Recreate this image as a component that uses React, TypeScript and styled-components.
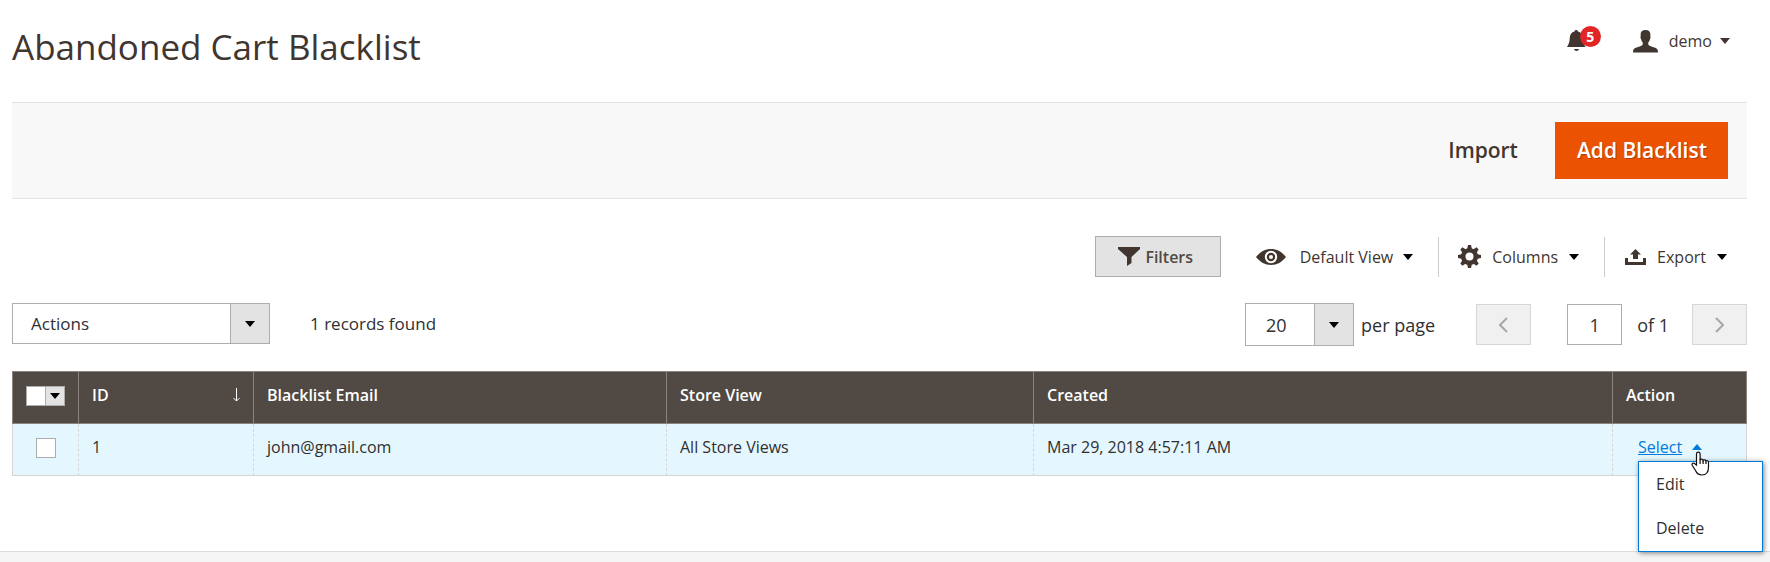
import React from "react";
import styled, { createGlobalStyle } from "styled-components";

const ink = "#41362f";
const text = "#303030";
const line = "#adadad";
const blue = "#007bdb";

const GlobalStyle = createGlobalStyle`
  *, *::before, *::after { box-sizing: border-box; }
  body {
    margin: 0;
    background: #fff;
    color: ${text};
    font-family: "Open Sans", "Noto Sans", sans-serif;
    font-size: 16px;
    line-height: 22px;
  }
  button, input, select { font: inherit; color: inherit; margin: 0; border-radius: 0; }
  #root { min-height: 100vh; display: flex; flex-direction: column; }
`;

const Page = styled.div`
  display: flex;
  flex-direction: column;
  padding: 0 23px 0 12px;
`;

const Header = styled.header`
  display: flex;
  justify-content: space-between;
  align-items: flex-start;
  height: 102px;
  padding: 23px 17px 0 0;
`;

const Title = styled.h1`
  margin: 0;
  color: ${ink};
  font-size: 35px;
  line-height: 48px;
  font-weight: 400;
`;

const UserArea = styled.div`
  display: flex;
  align-items: center;
  gap: 32px;
  height: 36px;
`;

const PlainButton = styled.button<{ $gap?: number }>`
  display: flex;
  align-items: center;
  gap: ${(p) => p.$gap ?? 0}px;
  padding: 0;
  border: 0;
  background: none;
  color: ${ink};
  white-space: nowrap;
  cursor: pointer;
`;

const BellButton = styled(PlainButton)`
  position: relative;
  width: 34px;
  height: 30px;
`;

const Badge = styled.span`
  position: absolute;
  top: 0;
  right: 0;
  width: 21px;
  height: 21px;
  border-radius: 50%;
  background: #e22626;
  color: #fff;
  font-size: 14px;
  line-height: 21px;
  font-weight: 700;
  text-align: center;
`;

const UserButton = styled(PlainButton)`
  gap: 8px;
  svg:first-child { margin-right: 3px; }
`;

const ActionBar = styled.section`
  display: flex;
  justify-content: flex-end;
  align-items: center;
  gap: 37px;
  padding: 19px;
  border-top: 1px solid #e3e3e3;
  border-bottom: 1px solid #e3e3e3;
  background: #f8f8f8;
`;

const ImportButton = styled(PlainButton)`
  font-size: 21px;
  line-height: 27px;
  font-weight: 600;
`;

const PrimaryButton = styled(ImportButton)`
  height: 57px;
  padding: 0 21px 0 22px;
  background: #eb5202;
  color: #fff;
  text-shadow: 1px 1px 0 rgba(0, 0, 0, 0.25);
`;

const Toolbar = styled.div`
  display: flex;
  justify-content: flex-end;
  align-items: center;
  margin-top: 37px;
`;

const FiltersButton = styled(PlainButton)`
  justify-content: center;
  width: 126px;
  height: 41px;
  padding-right: 4px;
  border: 1px solid ${line};
  background: #e3e3e3;
  color: #514943;
  font-weight: 600;
`;

const ToolItem = styled.div<{ $divided?: boolean; $left: number; $right: number }>`
  display: flex;
  align-items: center;
  height: 40px;
  padding: 0 ${(p) => p.$right}px 0 ${(p) => p.$left}px;
  border-left: ${(p) => (p.$divided ? "1px solid #ccc" : "0")};
`;

const Controls = styled.div`
  display: flex;
  justify-content: space-between;
  align-items: flex-start;
  margin-top: 26px;
  line-height: 24px;
`;

const Group = styled.div<{ $gap: number; $size?: number }>`
  display: flex;
  align-items: center;
  gap: ${(p) => p.$gap}px;
  font-size: ${(p) => (p.$size ? `${p.$size}px` : "inherit")};
  white-space: nowrap;
`;

const SelectBox = styled.span<{ $width: number; $height: number }>`
  display: grid;
  grid-template-columns: 1fr 39px;
  width: ${(p) => p.$width}px;
  height: ${(p) => p.$height}px;
  border: 1px solid ${line};
  background: #fff;
`;

const NativeSelect = styled.select<{ $inset?: number }>`
  grid-area: 1 / 1 / 2 / 3;
  width: 100%;
  padding: 0 0 0 ${(p) => p.$inset ?? 18}px;
  border: 0;
  background: none;
  appearance: none;
`;

const SelectArrow = styled.span`
  grid-area: 1 / 2 / 2 / 3;
  display: flex;
  align-items: center;
  justify-content: center;
  border-left: 1px solid ${line};
  background: #e3e3e3;
  pointer-events: none;
`;

const PageButton = styled.button`
  display: flex;
  align-items: center;
  justify-content: center;
  width: 55px;
  height: 41px;
  padding: 0;
  border: 1px solid #d6d6d6;
  background: #f0f0f0;
`;

const PageInput = styled.input`
  width: 55px;
  height: 41px;
  padding: 0;
  border: 1px solid ${line};
  background: #fff;
  text-align: center;
`;

const Grid = styled.table`
  width: 100%;
  margin-top: 25px;
  table-layout: fixed;
  border-collapse: separate;
  border-spacing: 0;
`;

const Th = styled.th`
  height: 53px;
  padding: 0 13px 5px;
  border: 1px solid #8a837f;
  border-right-width: 0;
  background: #514943;
  color: #fff;
  font-weight: 600;
  text-align: left;
  &:last-child { border-right-width: 1px; }
`;

const HeadLabel = styled.span`
  display: flex;
  justify-content: space-between;
  align-items: center;
`;

const Td = styled.td`
  height: 52px;
  padding: 0 13px 6px;
  border-left: 1px dashed #d6d6d6;
  border-bottom: 1px solid #d6d6d6;
  background: #e5f7fe;
  &:first-child { border-left-style: solid; }
  &:last-child { border-right: 1px solid #d6d6d6; }
`;

const CheckCell = styled(Td)`
  padding: 0 0 4px 23px;
`;

const CheckHead = styled(Th)`
  padding: 0 0 4px 13px;
`;

const Checkbox = styled.input`
  display: block;
  width: 20px;
  height: 20px;
  appearance: none;
  border: 1px solid ${line};
  background: #fff;
`;

const MultiCheck = styled.div`
  display: flex;
  width: 39px;
`;

const MultiToggle = styled(PlainButton)`
  justify-content: center;
  width: 19px;
  height: 20px;
  border: 1px solid ${line};
  border-left: 0;
  background: #e3e3e3;
`;

const ActionSelect = styled.div`
  position: relative;
  width: 64px;
  margin-left: 12px;
`;

const SelectLink = styled(PlainButton)`
  color: ${blue};
  span { text-decoration: underline; }
`;

const Menu = styled.ul`
  position: absolute;
  top: 25px;
  left: 0;
  z-index: 1;
  width: 125px;
  margin: 0;
  padding: 0 0 1px;
  list-style: none;
  border: 1px solid ${blue};
  background: #fff;
  box-shadow: 1px 1px 5px rgba(0, 0, 0, 0.5);
`;

const MenuLink = styled.a`
  display: block;
  padding: 11px 17px;
  color: ${text};
  text-decoration: none;
`;

const Pointer = styled.svg`
  position: absolute;
  top: 15px;
  left: 53px;
  z-index: 2;
  pointer-events: none;
`;

const Footer = styled.footer`
  flex: 1;
  min-height: 11px;
  margin-top: 75px;
  border-top: 1px solid #dcdcdc;
  background: #f5f5f5;
`;

const Caret = ({ color = "#000", up = false }: { color?: string; up?: boolean }) => (
  <svg width="10" height="6" viewBox="0 0 10 6" aria-hidden="true">
    <path d={up ? "M0 6 5 0l5 6z" : "M0 0h10L5 6z"} fill={color} />
  </svg>
);

const BellIcon = () => (
  <svg width="20" height="22" viewBox="0 0 20 22" fill={ink} aria-hidden="true">
    <path d="M7.500 1.500C7.500.5 8.200 0 9.200 0s1.700.5 1.700 1.500c3.200.8 4.600 3 4.800 6 .2 4.300.8 6.500 2.800 9.500H0c2-3 2.600-5.200 2.800-9.500.2-3 1.500-5.200 4.700-6z" />
    <path d="M7 19h5c-.3 1.300-1.200 2-2.500 2S7.300 20.300 7 19z" />
  </svg>
);

const UserIcon = () => (
  <svg width="25" height="23" viewBox="0 0 25 23" fill={ink} aria-hidden="true">
    <path d="M12.500 0c3.400 0 5 1.800 4.900 5l-.1 1.500c.5.300.4 1.600-.3 2.300-.3 1.800-.9 3-1.700 3.800v2c.4.800 1.200 1.200 2.400 1.600 4 1.300 6.800 2 7.100 4.300l.2 2H0l.2-2c.3-2.300 3.100-3 7.100-4.300 1.200-.4 2-.8 2.400-1.600v-2c-.8-.8-1.400-2-1.700-3.800-.7-.7-.8-2-.3-2.300L7.600 5c-.1-3.200 1.500-5 4.900-5z" />
  </svg>
);

const FunnelIcon = () => (
  <svg width="22" height="19" viewBox="0 0 22 19" fill={ink} aria-hidden="true">
    <path d="M0 0h22v2l-8.500 8v6L9 19v-9L0 2z" />
  </svg>
);

const EyeIcon = () => (
  <svg width="30" height="16" viewBox="0 0 30 16" aria-hidden="true">
    <path d="M0 8C4 3 9 0 15 0s11 3 15 8c-4 5-9 8-15 8S4 13 0 8z" fill={ink} />
    <circle cx="15" cy="8" r="5.200" fill="none" stroke="#fff" strokeWidth="2" />
    <circle cx="15" cy="8" r="2" fill="#fff" />
  </svg>
);

const GearIcon = () => (
  <svg width="23" height="23" viewBox="0 0 23 23" aria-hidden="true">
    <g fill={ink}>
      {[0, 45, 90, 135, 180, 225, 270, 315].map((a) => (
        <path key={a} d="M9 4.500 10 0h3l1 4.500z" transform={`rotate(${a} 11.500 11.500)`} />
      ))}
    </g>
    <circle cx="11.500" cy="11.500" r="6.300" fill="none" stroke={ink} strokeWidth="4.600" />
  </svg>
);

const ExportIcon = () => (
  <svg width="21" height="16" viewBox="0 0 21 16" fill={ink} aria-hidden="true">
    <path d="M0 9h3v4h15V9h3v7H0z" />
    <path d="M10.500 0 16 5.500h-3V10H8V5.500H5z" />
  </svg>
);

const Chevron = ({ right = false }: { right?: boolean }) => (
  <svg width="9" height="16" viewBox="0 0 9 16" fill="none" stroke="#aaa6a3" strokeWidth="2" aria-hidden="true">
    <path d={right ? "M1 1l7 7-7 7" : "M8 1 1 8l7 7"} />
  </svg>
);

const SortArrow = () => (
  <svg width="7" height="14" viewBox="0 0 7 14" fill="none" stroke="#fff" aria-hidden="true">
    <path d="M3.500 0v13M.5 10l3 3 3-3" />
  </svg>
);

const HandPointer = () => (
  <Pointer width="19" height="25" viewBox="0 0 19 25" aria-hidden="true">
    <path
      d="M5.500 14V3a1.800 1.800 0 0 1 3.600 0v6c.3-1.300 2.700-1.200 3 .5.500-1 2.700-.8 2.900.7.700-.9 2.500-.5 2.500 1V16c0 5-2.500 8-6.500 8-3.300 0-5.300-1.500-6.500-4.500L1.300 14.500c-1-2 1.300-3.200 2.500-1.800z"
      fill="#fff"
      stroke="#111"
      strokeWidth="1.200"
    />
    <path d="M9.100 8v5M12.100 9.500V13M15 10.500V13" stroke="#111" strokeWidth="1.200" />
  </Pointer>
);

const columns = [
  { label: "ID", width: 175, sorted: true },
  { label: "Blacklist Email", width: 413 },
  { label: "Store View", width: 367 },
  { label: "Created", width: 579 },
  { label: "Action", width: 135 },
];

const rows = [{ id: "1", email: "john@gmail.com", store: "All Store Views", created: "Mar 29, 2018 4:57:11 AM" }];

export default function App() {
  return (
    <>
      <GlobalStyle />
      <Page>
        <Header>
          <Title>Abandoned Cart Blacklist</Title>
          <UserArea>
            <BellButton aria-label="Notifications">
              <BellIcon />
              <Badge>5</Badge>
            </BellButton>
            <UserButton>
              <UserIcon />
              demo
              <Caret color={ink} />
            </UserButton>
          </UserArea>
        </Header>

        <ActionBar>
          <ImportButton>Import</ImportButton>
          <PrimaryButton>Add Blacklist</PrimaryButton>
        </ActionBar>

        <Toolbar>
          <FiltersButton $gap={5}>
            <FunnelIcon />
            Filters
          </FiltersButton>
          <ToolItem $left={35} $right={25}>
            <PlainButton $gap={10}>
              <PlainButton as="span" $gap={14}>
                <EyeIcon />
                Default View
              </PlainButton>
              <Caret />
            </PlainButton>
          </ToolItem>
          <ToolItem $divided $left={19} $right={25}>
            <PlainButton $gap={11}>
              <GearIcon />
              Columns
              <Caret />
            </PlainButton>
          </ToolItem>
          <ToolItem $divided $left={20} $right={20}>
            <PlainButton $gap={11}>
              <ExportIcon />
              Export
              <Caret />
            </PlainButton>
          </ToolItem>
        </Toolbar>

        <Controls>
          <Group $gap={40} $size={17}>
            <SelectBox $width={258} $height={41}>
              <NativeSelect aria-label="Actions">
                <option>Actions</option>
              </NativeSelect>
              <SelectArrow>
                <Caret />
              </SelectArrow>
            </SelectBox>
            <span>1 records found</span>
          </Group>
          <Group $gap={23} $size={18}>
            <Group $gap={41}>
              <Group as="label" $gap={7}>
                <SelectBox $width={109} $height={43}>
                  <NativeSelect $inset={20}>
                    <option>20</option>
                  </NativeSelect>
                  <SelectArrow>
                    <Caret />
                  </SelectArrow>
                </SelectBox>
                per page
              </Group>
              <Group $gap={36}>
                <PageButton disabled aria-label="Previous page">
                  <Chevron />
                </PageButton>
                <Group as="label" $gap={15}>
                  <PageInput defaultValue="1" aria-label="Page" />
                  of 1
                </Group>
              </Group>
            </Group>
            <PageButton disabled aria-label="Next page">
              <Chevron right />
            </PageButton>
          </Group>
        </Controls>

        <Grid>
          <colgroup>
            <col style={{ width: 66 }} />
            {columns.map((c) => (
              <col key={c.label} style={{ width: c.width }} />
            ))}
          </colgroup>
          <thead>
            <tr>
              <CheckHead>
                <MultiCheck>
                  <Checkbox type="checkbox" aria-label="Select all" />
                  <MultiToggle aria-label="Selection options">
                    <Caret />
                  </MultiToggle>
                </MultiCheck>
              </CheckHead>
              {columns.map((c) => (
                <Th key={c.label}>
                  <HeadLabel>
                    {c.label}
                    {c.sorted && <SortArrow />}
                  </HeadLabel>
                </Th>
              ))}
            </tr>
          </thead>
          <tbody>
            {rows.map((r) => (
              <tr key={r.id}>
                <CheckCell>
                  <Checkbox type="checkbox" aria-label={`Select record ${r.id}`} />
                </CheckCell>
                <Td>{r.id}</Td>
                <Td>{r.email}</Td>
                <Td>{r.store}</Td>
                <Td>{r.created}</Td>
                <Td>
                  <ActionSelect>
                    <SelectLink $gap={10} aria-expanded="true">
                      <span>Select</span>
                      <Caret up color={blue} />
                    </SelectLink>
                    <Menu>
                      <li><MenuLink href="#edit">Edit</MenuLink></li>
                      <li><MenuLink href="#delete">Delete</MenuLink></li>
                    </Menu>
                    <HandPointer />
                  </ActionSelect>
                </Td>
              </tr>
            ))}
          </tbody>
        </Grid>
      </Page>
      <Footer />
    </>
  );
}
